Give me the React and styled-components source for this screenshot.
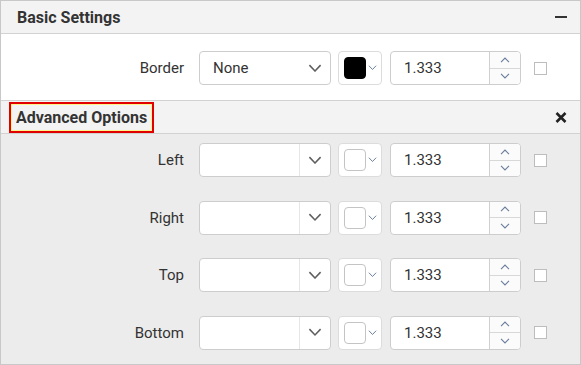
import React from 'react';
import styled, { createGlobalStyle } from 'styled-components';

const GlobalStyle = createGlobalStyle`
  body {
    margin: 0;
    font-family: Roboto, "Liberation Sans", sans-serif;
    color: #333;
  }
`;

const Panel = styled.div`
  width: 581px;
  height: 365px;
  box-sizing: border-box;
  border: 1px solid #c8c8c8;
  display: flex;
  flex-direction: column;
  background: #ececec;
`;

const Header = styled.div`
  height: 32px;
  flex: none;
  display: flex;
  align-items: center;
  justify-content: space-between;
  padding: 0 12px 0 ${(p) => (p.$focused ? '8px' : '16px')};
  background: #f3f3f3;
  border-bottom: 1px solid #d2d2d2;
`;

const Title = styled.div`
  font-size: 16px;
  font-weight: 700;
  color: #333;
  ${(p) => p.$focused && `
    box-sizing: border-box;
    height: 31px;
    display: flex;
    align-items: center;
    padding: 0 5px;
    border: 2px solid #e00000;
    outline: 1px solid #fff58a;
    outline-offset: -3px;
  `}
`;

const Body = styled.div`
  background: ${(p) => (p.$white ? '#fff' : '#ececec')};
  border-bottom: ${(p) => (p.$white ? '1px solid #d2d2d2' : 'none')};
  padding: ${(p) => (p.$white ? '17px 0 15px' : '9px 0')};
  display: flex;
  flex-direction: column;
  gap: 23.5px;
`;

const Row = styled.div`
  display: grid;
  grid-template-columns: 191px 132px 44px 132px 13px;
  column-gap: 7px;
  align-items: center;
  height: 34px;
`;

const Label = styled.div`
  font-size: 15px;
  color: #333;
  text-align: right;
  margin-right: 8px;
`;

const Dropdown = styled.div`
  height: 34px;
  box-sizing: border-box;
  border: 1px solid #cdcdcd;
  border-radius: 4px;
  background: #fff;
  display: flex;
  align-items: center;
`;

const DropText = styled.div`
  flex: 1;
  font-size: 15px;
  padding-left: 13px;
  color: #333;
`;

const DropButton = styled.div`
  width: 30px;
  height: 100%;
  display: flex;
  align-items: center;
  justify-content: center;
  border-left: ${(p) => (p.$divided ? '1px solid #e6e6e6' : 'none')};
`;

const ColorBox = styled.div`
  height: 34px;
  box-sizing: border-box;
  border: 1px solid #dcdcdc;
  border-radius: 4px;
  background: #fff;
  display: flex;
  align-items: center;
  padding-left: 5px;
`;

const Swatch = styled.div`
  width: 22px;
  height: 22px;
  box-sizing: border-box;
  border-radius: 4px;
  background: ${(p) => p.$color || '#fff'};
  border: 1px solid ${(p) => (p.$color ? p.$color : '#c4c4c4')};
  margin-right: 2px;
`;

const NumberBox = styled.div`
  height: 34px;
  box-sizing: border-box;
  border: 1px solid #cdcdcd;
  border-radius: 4px;
  background: #fff;
  display: flex;
  margin-left: 1px;
  overflow: hidden;
`;

const NumberText = styled.div`
  flex: 1;
  display: flex;
  align-items: center;
  padding-left: 13px;
  font-size: 15px;
  color: #333;
`;

const Spinner = styled.div`
  width: 30px;
  border-left: 1px solid #d0d0d0;
  background: #fbfbfb;
  display: flex;
  flex-direction: column;
`;

const SpinHalf = styled.div`
  flex: 1;
  display: flex;
  align-items: center;
  justify-content: center;
  & + & {
    border-top: 1px solid #d8d8d8;
  }
`;

const Check = styled.div`
  width: 13px;
  height: 13px;
  box-sizing: border-box;
  border: 1px solid #bdbdbd;
  background: #fff;
  margin-left: 6px;
`;

const IconButton = styled.div`
  width: 14px;
  height: 14px;
  display: flex;
  align-items: center;
  justify-content: center;
`;

const Chevron = ({ size = 12, color = '#666', up }) => (
  <svg width={size} height={size * 0.6} viewBox="0 0 10 6">
    <path
      d={up ? 'M1 5.2 L5 1 L9 5.2' : 'M1 0.8 L5 5 L9 0.8'}
      fill="none"
      stroke={color}
      strokeWidth="1.1"
    />
  </svg>
);

const SettingRow = ({ label, value, color, divided }) => (
  <Row>
    <Label>{label}</Label>
    <Dropdown>
      <DropText>{value}</DropText>
      <DropButton $divided={divided}>
        <Chevron size={14} color="#5f5f5f" />
      </DropButton>
    </Dropdown>
    <ColorBox>
      <Swatch $color={color} />
      <Chevron size={9} color="#6a7f9c" />
    </ColorBox>
    <NumberBox>
      <NumberText>1.333</NumberText>
      <Spinner>
        <SpinHalf><Chevron size={10} color="#6a7f9c" up /></SpinHalf>
        <SpinHalf><Chevron size={10} color="#6a7f9c" /></SpinHalf>
      </Spinner>
    </NumberBox>
    <Check />
  </Row>
);

export default function App() {
  const sides = ['Left', 'Right', 'Top', 'Bottom'];
  return (
    <>
      <GlobalStyle />
      <Panel>
        <Header>
          <Title>Basic Settings</Title>
          <IconButton>
            <svg width="12" height="2" viewBox="0 0 12 2">
              <rect width="12" height="2" fill="#333" />
            </svg>
          </IconButton>
        </Header>
        <Body $white>
          <SettingRow label="Border" value="None" color="#000" />
        </Body>
        <Header $focused>
          <Title $focused>Advanced Options</Title>
          <IconButton>
            <svg width="12" height="11" viewBox="0 0 12 11">
              <path d="M1.5 1 L10.5 10 M10.5 1 L1.5 10" stroke="#222" strokeWidth="2.6" />
            </svg>
          </IconButton>
        </Header>
        <Body>
          {sides.map((side) => (
            <SettingRow key={side} label={side} value="" divided />
          ))}
        </Body>
      </Panel>
    </>
  );
}
